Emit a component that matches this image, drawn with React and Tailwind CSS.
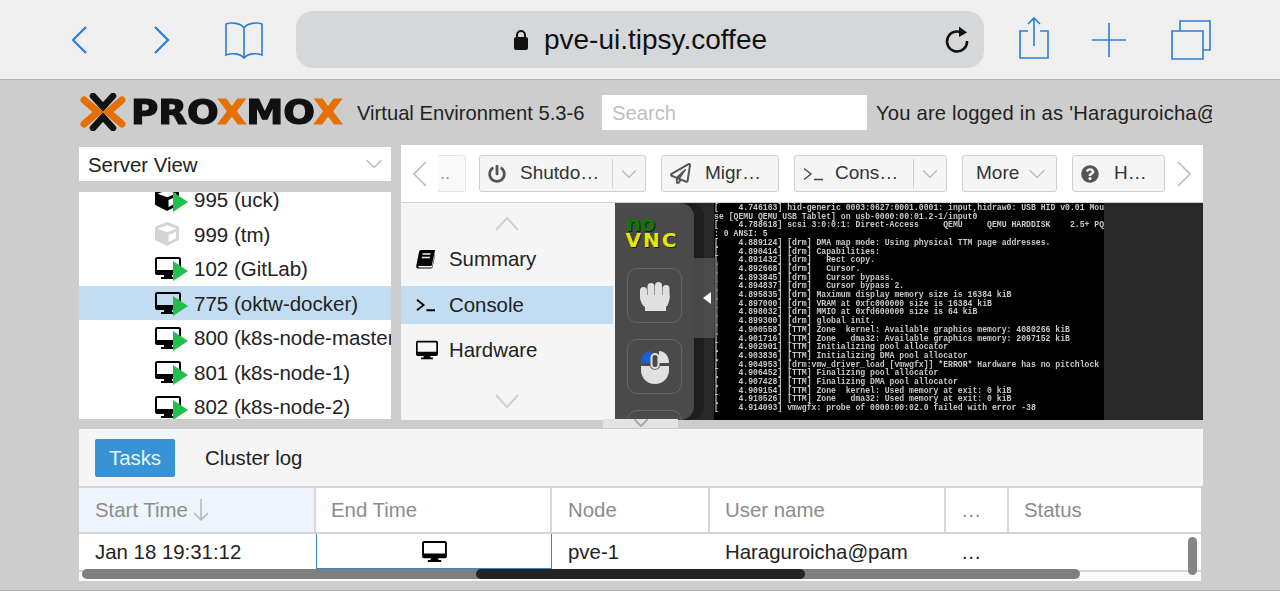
import { FaCube, FaPowerOff, FaQuestionCircle, FaRegPaperPlane } from 'react-icons/fa';
import { ChevronDown } from 'lucide-react';

const font = "font-['Liberation_Sans',Arial,sans-serif]";

const treeRows = [
  { label: '995 (uck)', kind: 'ct', running: true },
  { label: '999 (tm)', kind: 'ct-off' },
  { label: '102 (GitLab)', kind: 'vm', running: true },
  { label: '775 (oktw-docker)', kind: 'vm', running: true, selected: true },
  { label: '800 (k8s-node-master)', kind: 'vm', running: true },
  { label: '801 (k8s-node-1)', kind: 'vm', running: true },
  { label: '802 (k8s-node-2)', kind: 'vm', running: true },
];

const consoleLines = [
  '[    4.746163] hid-generic 0003:0627:0001.0001: input,hidraw0: USB HID v0.01 Mou',
  'se [QEMU QEMU USB Tablet] on usb-0000:00:01.2-1/input0',
  '[    4.788618] scsi 3:0:0:1: Direct-Access     QEMU     QEMU HARDDISK    2.5+ PQ',
  ': 0 ANSI: 5',
  '[    4.889124] [drm] DMA map mode: Using physical TTM page addresses.',
  '[    4.890414] [drm] Capabilities:',
  '[    4.891432] [drm]   Rect copy.',
  '[    4.892668] [drm]   Cursor.',
  '[    4.893845] [drm]   Cursor bypass.',
  '[    4.894837] [drm]   Cursor bypass 2.',
  '[    4.895835] [drm] Maximum display memory size is 16384 kiB',
  '[    4.897000] [drm] VRAM at 0xfc000000 size is 16384 kiB',
  '[    4.898032] [drm] MMIO at 0xfd600000 size is 64 kiB',
  '[    4.899300] [drm] global init.',
  '[    4.900558] [TTM] Zone  kernel: Available graphics memory: 4080266 kiB',
  '[    4.901716] [TTM] Zone   dma32: Available graphics memory: 2097152 kiB',
  '[    4.902901] [TTM] Initializing pool allocator',
  '[    4.903836] [TTM] Initializing DMA pool allocator',
  '[    4.904953] [drm:vmw_driver_load [vmwgfx]] *ERROR* Hardware has no pitchlock',
  '[    4.906452] [TTM] Finalizing pool allocator',
  '[    4.907428] [TTM] Finalizing DMA pool allocator',
  '[    4.909154] [TTM] Zone  kernel: Used memory at exit: 0 kiB',
  '[    4.910526] [TTM] Zone   dma32: Used memory at exit: 0 kiB',
  '[    4.914093] vmwgfx: probe of 0000:00:02.0 failed with error -38',
];

function Monitor({ width, height }) {
  return (
    <svg width={width} height={height} viewBox="0 0 26 22" fill="#000" className="shrink-0">
      <path fillRule="evenodd" d="M2 0h22a2 2 0 0 1 2 2v14a2 2 0 0 1-2 2h-7v2h3v2H6v-2h3v-2H2a2 2 0 0 1-2-2V2a2 2 0 0 1 2-2Zm0 2v11h22V2Z" />
    </svg>
  );
}

function Prompt({ stroke, strokeWidth, width }) {
  return (
    <svg width={width} height="14" viewBox="0 0 20 14" fill="none" stroke={stroke} strokeWidth={strokeWidth} className="shrink-0">
      <path d="M1 1.5 8 7l-7 5.5M11 12.5h9" />
    </svg>
  );
}

function Arrow({ dir, className }) {
  const paths = {
    left: 'M13 1 1 13l12 12',
    right: 'M1 1l12 12L1 25',
  };
  return (
    <svg width="14" height="26" viewBox="0 0 14 26" fill="none" stroke="#bdbdbd" strokeWidth="1.6" className={`shrink-0 ${className}`}>
      <path d={paths[dir]} />
    </svg>
  );
}

function SafariBar() {
  return (
    <div className="h-[80px] bg-[#efeff0] border-b border-[#b4b4b4] flex items-center text-[#2a7fd8]">
      <svg width="20" height="30" viewBox="0 0 20 30" fill="none" stroke="currentColor" strokeWidth="2.2" className="ml-[69px] shrink-0"><path d="M17 2 4 15l13 13" /></svg>
      <svg width="20" height="30" viewBox="0 0 20 30" fill="none" stroke="currentColor" strokeWidth="2.2" className="ml-[63px] shrink-0"><path d="m3 2 13 13L3 28" /></svg>
      <svg width="42" height="40" viewBox="0 0 42 40" fill="none" stroke="currentColor" strokeWidth="1.6" className="ml-[51px] shrink-0"><path d="M21 8C18 3 8 2 3 4v31c5-2 14-2 18 3 4-5 13-5 18-3V4c-5-2-15-1-18 4Zm0 0v29" /></svg>
      <div className="ml-[31px] w-[688px] h-[57px] rounded-[17px] bg-[#d6d7d9] flex items-center text-[#111] shrink-0 relative">
        <div className={`flex-1 flex items-center justify-center gap-[15px] text-[28px] ${font}`}>
          <svg width="16" height="23" viewBox="0 0 16 23" fill="#111"><path d="M3 10V7a5 5 0 0 1 10 0v3h-2V7a3 3 0 0 0-6 0v3Z" /><rect x="1" y="9" width="14" height="13" rx="2" /></svg>
          <span>pve-ui.tipsy.coffee</span>
        </div>
        <svg width="26" height="30" viewBox="0 0 26 30" fill="none" stroke="#111" strokeWidth="2.6" className="absolute right-[14px] top-[13px]"><path d="M19 9.5A10 10 0 1 0 23 17" /><path d="M15 2.5 23 8.5 15 13Z" fill="#111" stroke="none" /></svg>
      </div>
      <svg width="32" height="44" viewBox="0 0 32 44" fill="none" stroke="currentColor" strokeWidth="1.6" className="ml-[34px] -mt-[4px] shrink-0"><path d="M10 15H2v27h28V15h-8M16 30V2M10 8l6-6 6 6" /></svg>
      <svg width="34" height="34" viewBox="0 0 34 34" fill="none" stroke="currentColor" strokeWidth="1.6" className="ml-[42px] shrink-0"><path d="M17 0v34M0 17h34" /></svg>
      <svg width="40" height="40" viewBox="0 0 40 40" fill="none" stroke="currentColor" strokeWidth="1.6" className="ml-[45px] shrink-0"><path d="M1 11h31v28H1Z" /><path d="M9 11V1h30v29h-7" /></svg>
    </div>
  );
}

function Logo() {
  return (
    <div className="flex items-center w-[264px] shrink-0">
      <svg width="46" height="38" viewBox="0 0 46 38" fill="none" className="shrink-0 -mt-[1px]">
        <path d="M13 3 23 14 33 3M13 35 23 24 33 35" stroke="#111" strokeWidth="6.5" strokeLinecap="round" />
        <path d="M4 7 18 19 4 31M42 7 28 19 42 31" stroke="#e57000" strokeWidth="7" strokeLinecap="round" />
      </svg>
      <span className="ml-[5px] inline-block origin-left scale-x-[1.13] text-[33px] leading-none font-bold text-[#111] font-['DejaVu_Sans',sans-serif] [-webkit-text-stroke:1.2px_#111] whitespace-nowrap">
        PRO<span className="text-[#e57000] [-webkit-text-stroke:1.2px_#e57000]">X</span>MO<span className="text-[#e57000] [-webkit-text-stroke:1.2px_#e57000]">X</span>
      </span>
    </div>
  );
}

function Header() {
  return (
    <div className="h-[65px] flex items-center pl-[80px] overflow-hidden whitespace-nowrap text-[20.2px]">
      <Logo />
      <span className="ml-[13px] w-[245px] pt-[2px] text-[#222] shrink-0">Virtual Environment 5.3-6</span>
      <div className="w-[265px] h-[35px] pt-[1px] bg-white shrink-0 flex items-center pl-[10px] text-[#c0c0c0]">Search</div>
      <div className="ml-[9px] w-[336px] pt-[2px] overflow-hidden shrink-0 text-[#222] tracking-[0.2px]">You are logged in as 'Haraguroicha@pam'</div>
    </div>
  );
}

function TreeIcon({ kind, running }) {
  return (
    <div className="relative w-[26px] h-[24px] shrink-0 flex items-center">
      {kind === 'vm' && <Monitor width={26} height={22} />}
      {kind === 'ct' && <FaCube className="text-[24px] text-black" />}
      {kind === 'ct-off' && <FaCube className="text-[24px] text-[#d4d4d4]" />}
      {running && <div className="absolute left-[18px] top-[5px] w-0 h-0 border-y-[10px] border-y-transparent border-l-[15px] border-l-[#21bf4b]" />}
    </div>
  );
}

function Sidebar() {
  return (
    <div className="w-[312px] ml-[79px] shrink-0">
      <div className="h-[34px] mt-[2px] bg-white flex items-center justify-between pl-[9px] pr-[3px] text-[20.4px] text-[#222]">
        <span className="pt-[2px]">Server View</span>
        <ChevronDown size={28} strokeWidth={1.1} className="text-[#bbb]" />
      </div>
      <div className="mt-[11px] h-[227px] bg-white overflow-hidden">
        <div className="-mt-[10px]">
          {treeRows.map((row) => (
            <div key={row.label} className={`h-[34.6px] flex items-center pl-[76px] text-[20.5px] text-[#222] whitespace-nowrap ${row.selected ? 'bg-[#c2ddf2]' : ''}`}>
              <TreeIcon kind={row.kind} running={row.running} />
              <span className="ml-[13px] pt-[2px]">{row.label}</span>
            </div>
          ))}
        </div>
      </div>
    </div>
  );
}

function ToolButton({ icon, label, split, width, arrow, gap = 'ml-[10px]' }) {
  return (
    <div className={`h-[37px] rounded-[3px] border border-[#cfcfcf] bg-[#f5f5f5] flex items-center shrink-0 text-[19px] text-[#333] ${width}`}>
      {icon && <span className="ml-[8px] w-[22px] flex justify-start text-[#555]">{icon}</span>}
      <span className={icon ? gap : 'ml-[13px]'}>{label}</span>
      {arrow && <ChevronDown size={28} strokeWidth={1.1} className="ml-[4px] text-[#bbb]" />}
      {split && (
        <div className="ml-auto flex items-center">
          <div className="w-px h-[29px] bg-[#d0d0d0]" />
          <ChevronDown size={26} strokeWidth={1.2} className="mx-[3px] text-[#bbb]" />
        </div>
      )}
    </div>
  );
}

function Toolbar() {
  return (
    <div className="h-[58px] bg-white border-b border-[#cfcfcf] flex items-center whitespace-nowrap">
      <Arrow dir="left" className="ml-[12px]" />
      <div className="ml-[11px] w-[28px] h-[37px] rounded-r-[3px] border border-l-0 border-[#e5e5e5] bg-[#f8f8f8] text-[#999] text-[18px] flex items-center shrink-0 pl-[2px]">..</div>
      <div className="ml-[13px] flex items-center gap-[15px]">
        <ToolButton icon={<FaPowerOff size={18} />} label="Shutdo…" split width="w-[167px]" />
        <ToolButton icon={<FaRegPaperPlane size={21} />} label="Migr…" gap="ml-[13px]" width="w-[118px]" />
        <ToolButton icon={<Prompt stroke="#444" strokeWidth={1.3} width={20} />} label="Cons…" split width="w-[153px]" />
        <ToolButton label="More" arrow width="w-[95px]" />
        <ToolButton icon={<FaQuestionCircle size={18} />} label="H…" gap="ml-[11px]" width="w-[93px]" />
      </div>
      <Arrow dir="right" className="ml-[12px]" />
    </div>
  );
}

function SideMenu() {
  const items = [
    {
      icon: (
        <svg width="19" height="19" viewBox="0 0 19 19" className="shrink-0">
          <path d="M5 0h13.5c.5 0 .5.5.4 1l-3 14c-.2.8-.6 1-1.4 1H3.5c-1 0-1.5.5-1.2 1s.7.6 1.5.6H15c.8 0 1-.4 1.2-1l2.8-13v2l-2.4 11.5c-.2.8-.7 1.4-1.6 1.4H3C1 19 0 17.5.3 15.5L3 2c.2-1 1-2 2-2Z" fill="#000" />
          <path d="M6.5 4h8M5.8 7.5h8" stroke="#f5f5f5" strokeWidth="1.4" />
        </svg>
      ),
      label: 'Summary',
    },
    { icon: <Prompt stroke="#000" strokeWidth={1.9} width={19} />, label: 'Console', selected: true },
    { icon: <Monitor width={22} height={20} />, label: 'Hardware' },
  ];
  return (
    <div className="w-[212px] shrink-0 bg-[#f5f5f5] flex flex-col items-stretch">
      <svg width="24" height="15" viewBox="0 0 24 15" fill="none" stroke="#d0d0d0" strokeWidth="2" className="self-center mt-[13px] shrink-0"><path d="M1 14 12 2l11 12" /></svg>
      <div className="mt-[9px] flex flex-col gap-[7.5px]">
        {items.map((item) => (
          <div key={item.label} className={`h-[38px] flex items-center pl-[14px] text-[20.4px] text-[#222] ${item.selected ? 'bg-[#c2ddf2]' : ''}`}>
            <span className="w-[22px] flex justify-start pl-[1px] text-black">{item.icon}</span>
            <span className="ml-[12px] pt-[1px]">{item.label}</span>
          </div>
        ))}
      </div>
      <svg width="24" height="15" viewBox="0 0 24 15" fill="none" stroke="#d0d0d0" strokeWidth="2" className="self-center mt-[25px] shrink-0"><path d="m1 1 11 12L23 1" /></svg>
    </div>
  );
}

function VncConsole() {
  return (
    <div className="relative ml-[2px] flex-1 h-[217px] bg-[#282828] overflow-hidden flex">
      <div className="ml-[99px] w-[390px] h-full bg-black overflow-hidden pt-[1px]">
        <pre className="font-['Liberation_Mono',monospace] text-[8.15px] leading-[8.7px] text-[#c8c8c8] font-bold blur-[0.3px]">{consoleLines.join('\n')}</pre>
      </div>
      {/* noVNC control bar sits on top of the screen */}
      <div className="absolute left-0 top-0 w-[79px] h-[217px] bg-[#4a4a4a] rounded-r-[14px] shadow-[10px_0_0_#1e1e1e] flex flex-col items-center overflow-hidden">
        <div className="mt-[15px] -ml-[2px] w-[56px] shrink-0 font-['DejaVu_Sans',sans-serif] font-bold [text-shadow:1px_1px_0_#1a1a1a]">
          <div className="text-[#117700] text-[22px] h-[14px] leading-[12px] tracking-[-1px]">no</div>
          <div className="text-[#e5e500] text-[20px] h-[16px] leading-[16px] tracking-[2px] whitespace-nowrap">VNC</div>
        </div>
        <div className="mt-[20px] w-[55px] h-[55px] shrink-0 rounded-[10px] border border-[#666] flex items-center justify-center">
          <svg width="32" height="30" viewBox="0 0 32 30" fill="#e0e0e0">
            <rect x="1" y="6" width="7" height="14" rx="3.5" />
            <rect x="8.5" y="2" width="7" height="18" rx="3.5" />
            <rect x="16" y="1" width="7" height="18" rx="3.5" />
            <rect x="23.5" y="4" width="7" height="16" rx="3.5" />
            <path d="M1 14h29.5c.5 6-1.5 10-3.5 12v4H6v-4c-3-2-5-6-5-12Z" />
          </svg>
        </div>
        <div className="mt-[16px] w-[55px] h-[55px] shrink-0 rounded-[10px] border border-[#666] flex items-center justify-center">
          <svg width="30" height="34" viewBox="0 0 30 34">
            <path d="M1 13C1 6 5 1 11 1v12Z" fill="#1c5fd1" />
            <path d="M19 1c6 0 10 5 10 12H19Z" fill="#e0e0e0" />
            <path d="M1 16h9c1 5 9 5 10 0h9v4c0 8-6 14-14 14S1 28 1 20Z" fill="#e0e0e0" />
            <rect x="11.5" y="4" width="7" height="14" rx="3.5" fill="none" stroke="#e0e0e0" strokeWidth="2" />
          </svg>
        </div>
        <div className="mt-[16px] w-[55px] h-[55px] shrink-0 rounded-[10px] border border-[#666]" />
      </div>
      <div className="absolute left-[79px] top-[55px] w-[24px] h-[80px] rounded-r-[5px] bg-[#5a5a5a]/70 flex items-center justify-center">
        <div className="ml-[1px] w-0 h-0 border-y-[6px] border-y-transparent border-r-[8px] border-r-white" />
      </div>
    </div>
  );
}

function MainPanel() {
  return (
    <div className="ml-[10px] w-[802px] shrink-0 bg-[#f5f5f5] relative">
      <Toolbar />
      <div className="flex h-[217px]">
        <SideMenu />
        <VncConsole />
      </div>
      {/* tab strip scroller hanging over the split bar */}
      <div className="absolute left-[202px] top-[274px] w-[75px] h-[9px] bg-[#e3e3e3] flex justify-center overflow-hidden">
        <ChevronDown size={24} className="-mt-[8px] text-[#aaa]" />
      </div>
    </div>
  );
}

const columns = [
  { title: 'Start Time', width: 'w-[237px]', pad: 'pl-[16px]', sort: true, value: 'Jan 18 19:31:12' },
  { title: 'End Time', width: 'w-[236px]', pad: 'pl-[15px]', focus: true },
  { title: 'Node', width: 'w-[158px]', pad: 'pl-[16px]', value: 'pve-1' },
  { title: 'User name', width: 'w-[236px]', pad: 'pl-[15px]', value: 'Haraguroicha@pam' },
  { title: '…', width: 'w-[63px]', pad: 'pl-[15px]', value: '…' },
  { title: 'Status', width: 'w-[192px]', pad: 'pl-[15px]' },
];

function TaskPanel() {
  return (
    <div className="mt-[9px] ml-[79px] w-[1124px] h-[152px] relative overflow-hidden">
      <div className="h-[57px] bg-[#f5f5f5] flex items-center pl-[16px] text-[20.4px]">
        <div className="w-[80px] h-[38px] pt-[1px] rounded-[2px] bg-[#3892d4] text-white/90 flex items-center justify-center">Tasks</div>
        <div className="ml-[30px] pt-[2px] text-[#222]">Cluster log</div>
      </div>
      <div className="mr-[2px] flex h-[48px] bg-white border-y-2 border-[#d4d4d4] text-[20.4px] text-[#8c8c8c]">
        {columns.map((col) => (
          <div key={col.title} className={`${col.width} ${col.pad} shrink-0 flex items-center border-r-2 border-[#d8d8d8] last:border-r-0 ${col.sort ? 'bg-[#edf4fb]' : ''}`}>
            {col.title}
            {col.sort && (
              <svg width="16" height="24" viewBox="0 0 16 24" fill="none" stroke="#b5b5b5" strokeWidth="1.5" className="ml-[5px]"><path d="M8 1v21M1 15l7 7 7-7" /></svg>
            )}
          </div>
        ))}
      </div>
      <div className="mr-[2px] flex h-[38px] bg-white border-b-2 border-[#d4d4d4] text-[20.4px] text-[#222]">
        {columns.map((col) => (
          <div key={col.title} className={`${col.width} shrink-0 flex items-center ${col.focus ? 'h-[35px] justify-center border-x border-b border-[#3e86bd]' : col.pad}`}>
            {col.focus ? <Monitor width={25} height={21} /> : col.value}
          </div>
        ))}
      </div>
      <div className="mr-[2px] h-[9px] bg-[#fafafa]" />
      {/* iOS scroll indicators */}
      <div className="absolute left-[3px] top-[140px] w-[998px] h-[10px] rounded-full bg-[#7f7f7f]">
        <div className="absolute left-[394px] top-0 w-[329px] h-[10px] rounded-full bg-[#242424]" />
      </div>
      <div className="absolute left-[1109px] top-[108px] w-[9px] h-[38px] rounded-full bg-[#858585]" />
    </div>
  );
}

export default function App() {
  return (
    <div className={`w-[1280px] h-[591px] overflow-hidden bg-[#cdcdcd] ${font}`}>
      <SafariBar />
      <Header />
      <div className="flex">
        <Sidebar />
        <MainPanel />
      </div>
      <TaskPanel />
      <div className="mt-[9px] h-[2px] bg-[#b0b0b0]" />
    </div>
  );
}
